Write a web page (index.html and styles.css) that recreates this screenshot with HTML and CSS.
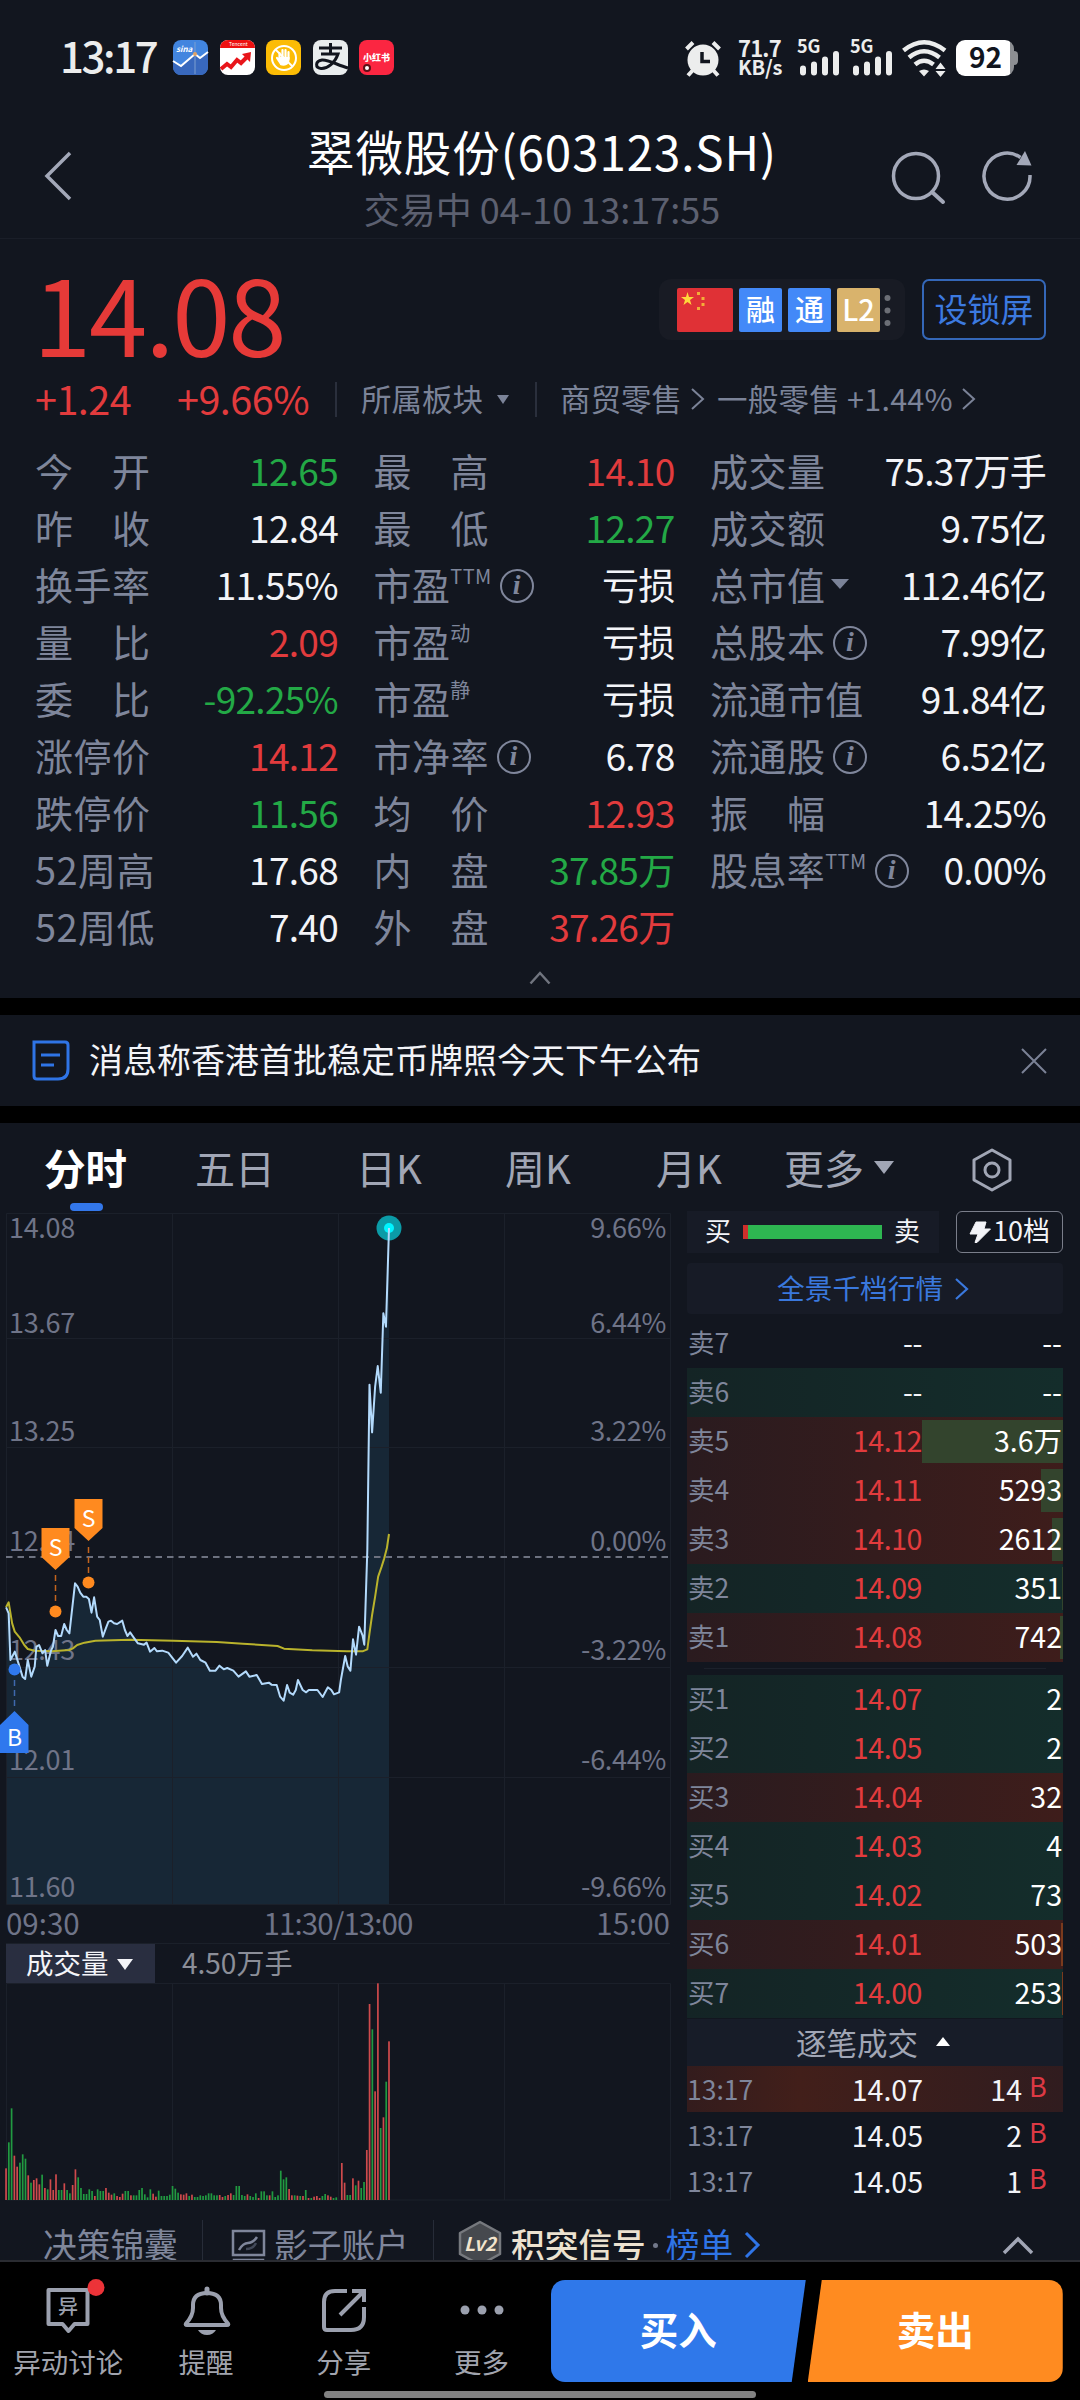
FILE: index.html
```html
<!DOCTYPE html>
<html lang="zh-CN">
<head>
    <meta charset="UTF-8">
    <meta name="viewport" content="width=device-width, initial-scale=1.0">
    <title>翠微股份(603123.SH)</title>
    <link rel="stylesheet" href="styles.css">
    <script>
        window.onload = function(){
            //成交量柱子，正数为红，负数为绿
            var morning = [95,-173,-275,133,100,-112,-137,-124,74,-52,60,65,47,-76,36,-32,62,30,77,-30,
                -30,50,-30,-20,45,92,-68,-36,-18,-18,-32,-27,12,-32,-27,-27,36,22,16,-20,
                12,9,19,-27,-27,14,-14,-14,-30,-36,-17,-8,-32,19,10,-28,-12,-12,-12,-16,
                -42,-34,-22,17,16,20,-12,16,-9,-9,-14,-12,-14,-20,-20,-14,-14,15,9,-12,
                15,20,-15,-42,-42,-15,-12,17,-12,-9,-20,6,-26,-26,-14,14,-26,-9,-14,-88,
                -62,-68,33,14,-14,13,-12,12,-30,6,-6,10,12,6,-12,-18,14,10,-6,-8];
            var afternoon = [111,52,-15,-15,65,-44,58,-36,-54,150,588,-512,326,650,-216,248,-355,476];
            var bars = document.getElementById("bars");
            draw(morning, 0);
            draw(afternoon, 121);

            function draw(list, start){
                for(var i = 0; i < list.length; i++){
                    var h = Math.abs(list[i]) / 3;
                    var rect = document.createElementNS("http://www.w3.org/2000/svg", "rect");
                    rect.setAttribute("x", (5.2 + (start + i) * 2.775).toFixed(2));
                    rect.setAttribute("y", (217 - h).toFixed(2));
                    rect.setAttribute("width", 1.7);
                    rect.setAttribute("height", h.toFixed(2));
                    rect.setAttribute("class", list[i] > 0 ? "bar_up" : "bar_down");
                    bars.appendChild(rect);
                }
            }
        }
    </script>
</head>
<body>
    <!-- 状态栏 -->
    <div class="status">
        <span class="clock">13:17</span>
        <div class="apps">
            <svg width="35" height="35" viewBox="0 0 35 35">
                <rect width="35" height="35" rx="8" fill="#4285df"/>
                <path d="M0 21L8 26L22 14L27 18L35 12V27a8 8 0 0 1-8 8H8a8 8 0 0 1-8-8z" fill="#3868bd"/>
                <path d="M0 21L8 26L22 14L27 18L35 12" fill="none" stroke="#fff" stroke-width="2"/>
                <path d="M22 2V34" stroke="#7d9fd0" stroke-width="1"/>
                <circle cx="22" cy="14" r="2" fill="#e0a266"/>
                <text x="3" y="12" font-size="8" font-style="italic" font-weight="700" fill="#fff">sina</text>
            </svg>
            <svg width="35" height="35" viewBox="0 0 35 35">
                <rect width="35" height="35" rx="8" fill="#fff"/>
                <path d="M0 8a8 8 0 0 1 8-8H27a8 8 0 0 1 8 8z" fill="#ee1111"/>
                <text x="9" y="6" font-size="5" fill="#fff">Tencent</text>
                <path d="M1 29L7 24L11 27L17 20L21 23L28 16" fill="none" stroke="#e8151a" stroke-width="4"/>
                <path d="M22 14L31 12L30 22z" fill="#e8151a"/>
            </svg>
            <svg width="35" height="35" viewBox="0 0 35 35">
                <rect width="35" height="35" rx="8" fill="#fcbc05"/>
                <circle cx="18" cy="18" r="12" fill="none" stroke="#fff" stroke-width="2"/>
                <path d="M13.500 20V13M16.500 18V10M19.500 18V10M22.500 19V12M11 18L15 24" stroke="#fff" stroke-width="2.200" stroke-linecap="round"/>
                <path d="M12.500 17H23.500V20a6 6 0 0 1-9 5z" fill="#fff"/>
                <path d="M9.500 9.500L26.500 26.500" stroke="#fff" stroke-width="1.800"/>
            </svg>
            <svg width="35" height="35" viewBox="0 0 35 35">
                <rect width="35" height="35" rx="8" fill="#e9edee"/>
                <path d="M6 8H29M17.500 3V14M8 14H25C22 23 14 29 8 28.500C2 28 2 21 9 20C16 19.500 24 25 35 28" fill="none" stroke="#11151e" stroke-width="3"/>
            </svg>
            <svg width="35" height="35" viewBox="0 0 35 35">
                <rect width="35" height="35" rx="8" fill="#fb2641"/>
                <text x="4" y="21" font-size="9" font-weight="900" fill="#fff">小红书</text>
                <circle cx="8" cy="28" r="3" fill="#fff" stroke="#5b1018" stroke-width="2"/>
            </svg>
        </div>
        <svg class="alarm" width="36" height="37" viewBox="0 0 36 37">
            <circle cx="18" cy="20" r="15.500" fill="#eceded"/>
            <path d="M1.500 9L8 2.500M34.500 9L28 2.500M8 30L3 35.500M28 30L33 35.500" stroke="#eceded" stroke-width="4"/>
            <path d="M17 12V21.500H25" fill="none" stroke="#11151e" stroke-width="3.500"/>
        </svg>
        <div class="speed"><span>71.7</span><span>KB/s</span></div>
        <div class="signal">
            <span>5G</span>
            <svg width="42" height="26" viewBox="0 0 42 26"><path d="M4 18.500V22.500M15 14.500V22.500M26 9.500V22.500M37 4V22.500" stroke="#eceded" stroke-width="6" stroke-linecap="round"/></svg>
        </div>
        <div class="signal">
            <span>5G</span>
            <svg width="42" height="26" viewBox="0 0 42 26"><path d="M4 18.500V22.500M15 14.500V22.500M26 9.500V22.500M37 4V22.500" stroke="#eceded" stroke-width="6" stroke-linecap="round"/></svg>
        </div>
        <svg class="wifi" width="46" height="37" viewBox="0 0 46 37">
            <path d="M1.500 10.500Q22 -6 43 10.500M7 17.500Q22 5 37.500 17.500M13 24.500Q22 17 31.500 24.500" fill="none" stroke="#eceded" stroke-width="4.500"/>
            <path d="M17 31Q22 28 27 31L22 36.500zM33.500 29L38.500 22.500L43.500 29zM33.500 31L38.500 37L43.500 31z" fill="#eceded"/>
        </svg>
        <div class="battery"><span>92</span></div>
        <i class="nub"></i>
    </div>

    <!-- 标题 -->
    <div class="header">
        <svg width="30" height="50" viewBox="0 0 30 50"><path d="M27 2L4 25L27 48" fill="none" stroke="#a3a8b8" stroke-width="3.500"/></svg>
        <div class="title">
            <h1>翠微股份(603123.SH)</h1>
            <p>交易中 04-10 13:17:55</p>
        </div>
        <svg class="search" width="56" height="54" viewBox="0 0 56 54">
            <circle cx="24" cy="24" r="22.500" fill="none" stroke="#a3a8b8" stroke-width="3.500"/>
            <path d="M40 40L51 50" stroke="#a3a8b8" stroke-width="4" stroke-linecap="round"/>
        </svg>
        <svg width="52" height="54" viewBox="0 0 52 54">
            <path d="M38.500 6.500A23 23 0 1 0 48 24" fill="none" stroke="#a3a8b8" stroke-width="3.500"/>
            <path d="M43 0L34.500 14L49.500 14.500z" fill="#a3a8b8"/>
        </svg>
    </div>

    <!-- 报价 -->
    <div class="quote">
        <div class="price_row">
            <span class="price">14.08</span>
            <div class="tags">
                <svg width="56" height="44" viewBox="0 0 56 44">
                    <rect width="56" height="44" rx="2" fill="#e03136"/>
                    <path d="M10.500 4L12 9H17L13 12L14.500 17L10.500 14L6.500 17L8 12L4 9H9z" fill="#ffd83b"/>
                    <path d="M20 4h3v3h-3zM24.500 9h3v3h-3zM24.500 15h3v3h-3zM20 19h3v3h-3z" fill="#f3ae38"/>
                </svg>
                <span class="tag">融</span>
                <span class="tag">通</span>
                <span class="tag gold">L2</span>
                <svg class="dots" width="7" height="34" viewBox="0 0 7 34"><g fill="#6c6f76"><circle cx="3.500" cy="5" r="3"/><circle cx="3.500" cy="17.500" r="3"/><circle cx="3.500" cy="30" r="3"/></g></svg>
            </div>
            <span class="lock">设锁屏</span>
        </div>
        <div class="change_row">
            <span class="change">+1.24</span>
            <span class="change pct">+9.66%</span>
            <span class="sector">所属板块<i class="tri"></i></span>
            <span class="industry">商贸零售<svg width="16" height="24" viewBox="0 0 16 24"><path d="M2 2L13 12L2 22" fill="none" stroke="#7b8398" stroke-width="2"/></svg></span>
            <span class="industry second">一般零售 +1.44%<svg width="16" height="24" viewBox="0 0 16 24"><path d="M2 2L13 12L2 22" fill="none" stroke="#7b8398" stroke-width="2"/></svg></span>
        </div>
        <div class="stats">
            <ul>
                <li><b>今开</b><em class="down">12.65</em></li>
                <li><b>昨收</b><em>12.84</em></li>
                <li><b>换手率</b><em>11.55%</em></li>
                <li><b>量比</b><em class="up">2.09</em></li>
                <li><b>委比</b><em class="down">-92.25%</em></li>
                <li><b>涨停价</b><em class="up">14.12</em></li>
                <li><b>跌停价</b><em class="down">11.56</em></li>
                <li><b class="long">52周高</b><em>17.68</em></li>
                <li><b class="long">52周低</b><em>7.40</em></li>
            </ul>
            <ul>
                <li><b>最高</b><em class="up">14.10</em></li>
                <li><b>最低</b><em class="down">12.27</em></li>
                <li><b class="long">市盈<sup>TTM</sup></b><i class="info">i</i><em>亏损</em></li>
                <li><b class="long">市盈<sup>动</sup></b><em>亏损</em></li>
                <li><b class="long">市盈<sup>静</sup></b><em>亏损</em></li>
                <li><b>市净率</b><i class="info">i</i><em>6.78</em></li>
                <li><b>均价</b><em class="up">12.93</em></li>
                <li><b>内盘</b><em class="down">37.85万</em></li>
                <li><b>外盘</b><em class="up">37.26万</em></li>
            </ul>
            <ul>
                <li><b>成交量</b><em>75.37万手</em></li>
                <li><b>成交额</b><em>9.75亿</em></li>
                <li><b>总市值</b><i class="tri"></i><em>112.46亿</em></li>
                <li><b>总股本</b><i class="info">i</i><em>7.99亿</em></li>
                <li><b class="long">流通市值</b><em>91.84亿</em></li>
                <li><b>流通股</b><i class="info">i</i><em>6.52亿</em></li>
                <li><b>振幅</b><em>14.25%</em></li>
                <li><b class="long">股息率<sup>TTM</sup></b><i class="info">i</i><em>0.00%</em></li>
            </ul>
        </div>
        <svg class="fold" width="22" height="14" viewBox="0 0 22 14"><path d="M1.500 12.500L11 2L20.500 12.500" fill="none" stroke="#70747e" stroke-width="2.500"/></svg>
    </div>

    <!-- 消息 -->
    <div class="news">
        <svg width="38" height="41" viewBox="0 0 38 41">
            <path d="M2 2H33Q36 2 36 5V29Q36 39 26 39H5Q2 39 2 36z" fill="none" stroke="#2f74e6" stroke-width="3"/>
            <path d="M9 15H28M9 25H22" stroke="#2f74e6" stroke-width="3"/>
        </svg>
        <p>消息称香港首批稳定币牌照今天下午公布</p>
        <svg width="28" height="28" viewBox="0 0 28 28"><path d="M2 2L26 26M26 2L2 26" stroke="#7b8296" stroke-width="2"/></svg>
    </div>

    <!-- 周期 -->
    <div class="tabs">
        <span class="active">分时</span>
        <span>五日</span>
        <span>日K</span>
        <span>周K</span>
        <span>月K</span>
        <span class="more">更多<i class="tri"></i></span>
        <svg width="42" height="44" viewBox="0 0 42 44">
            <path d="M21 2L39 12V32L21 42L3 32V12z" fill="none" stroke="#a1a6b5" stroke-width="3" stroke-linejoin="round"/>
            <circle cx="21" cy="22" r="7" fill="none" stroke="#a1a6b5" stroke-width="3"/>
        </svg>
    </div>

    <div class="main">
        <div class="chart">
            <svg width="680" height="697" viewBox="0 1211 680 697">
                <g transform="translate(0 1550) scale(.43367 .33333)">
                    <path class="area" d="M14 172L20 190L24 330L34 305L45 350L52 380L58 387L64 330L72 380L80 350L84 290L90 285L98 310L104 300L109 347L118 300L122 290L128 240L134 258L141 258L148 222L154 240L160 250L173 100L179 110L185 128L192 140L199 140L205 147L211 188L217 142L224 200L230 210L237 260L244 235L250 215L256 212L263 220L270 222L282 212L288 240L294 258L300 247L308 262L318 280L332 284L338 278L346 305L356 294L362 304L374 302L388 308L406 338L420 318L433 293L445 320L453 311L462 330L474 338L484 362L497 362L506 347L516 358L524 354L538 362L550 380L567 364L575 380L592 375L604 402L620 398L626 404L638 405L646 440L654 452L662 405L668 428L676 434L682 420L687 390L698 420L706 427L712 420L732 420L744 441L756 412L764 420L770 433L782 427L786 390L796 318L802 350L808 362L814 268L821 314L828 230L836 256L840 284L847 0L852 -496L858 -353L865 -490L871 -552L878 -472L884 -710L890 -670L897 -966V1062H14z"/>
                </g>
                <path class="grid" d="M6.500 1213.500H670.500V1904.500H6.500zM172.500 1213V1904M338.500 1213V1904M504.500 1213V1904M6 1338.500H670M6 1447.500H670M6 1667.500H670M6 1777.500H670"/>
                <path d="M6 1557H670" stroke="#6d7280" stroke-width="2" stroke-dasharray="6.500 5"/>
                <g class="axis">
                    <text x="9" y="1238">14.08</text>
                    <text x="9" y="1333">13.67</text>
                    <text x="9" y="1441">13.25</text>
                    <text x="9" y="1551">12.84</text>
                    <text x="9" y="1660">12.43</text>
                    <text x="9" y="1770">12.01</text>
                    <text x="9" y="1897">11.60</text>
                </g>
                <g class="axis right">
                    <text x="666" y="1238">9.66%</text>
                    <text x="666" y="1333">6.44%</text>
                    <text x="666" y="1441">3.22%</text>
                    <text x="666" y="1551">0.00%</text>
                    <text x="666" y="1660">-3.22%</text>
                    <text x="666" y="1770">-6.44%</text>
                    <text x="666" y="1897">-9.66%</text>
                </g>
                <circle cx="389" cy="1228" r="12.500" fill="#0b9ba7"/>
                <circle cx="389" cy="1228" r="5" fill="#00f4ff"/>
                <g transform="translate(0 1550) scale(.43367 .33333)">
                    <path class="avg" d="M14 172L20 157L28 220L34 245L45 262L56 285L64 297L80 302L120 304L160 300L168 295L178 285L195 278L220 272L300 269L400 272L500 276L560 281L640 288L655 296L720 301L800 304L836 304L847 298L852 250L858 195L865 140L872 80L880 50L886 25L892 -5L897 -48"/>
                    <path class="line" d="M14 172L20 190L24 330L34 305L45 350L52 380L58 387L64 330L72 380L80 350L84 290L90 285L98 310L104 300L109 347L118 300L122 290L128 240L134 258L141 258L148 222L154 240L160 250L173 100L179 110L185 128L192 140L199 140L205 147L211 188L217 142L224 200L230 210L237 260L244 235L250 215L256 212L263 220L270 222L282 212L288 240L294 258L300 247L308 262L318 280L332 284L338 278L346 305L356 294L362 304L374 302L388 308L406 338L420 318L433 293L445 320L453 311L462 330L474 338L484 362L497 362L506 347L516 358L524 354L538 362L550 380L567 364L575 380L592 375L604 402L620 398L626 404L638 405L646 440L654 452L662 405L668 428L676 434L682 420L687 390L698 420L706 427L712 420L732 420L744 441L756 412L764 420L770 433L782 427L786 390L796 318L802 350L808 362L814 268L821 314L828 230L836 256L840 284L847 0L852 -496L858 -353L865 -490L871 -552L878 -472L884 -710L890 -670L897 -966"/>
                </g>
                <!-- 买卖点 -->
                <g class="sell_mark">
                    <path class="dash" d="M55.500 1575V1605M88.500 1547V1576"/>
                    <circle cx="55.500" cy="1611.500" r="6"/>
                    <circle cx="88.500" cy="1582.500" r="6"/>
                    <path d="M41.500 1528H69.500V1557L55.500 1570L41.500 1557z"/>
                    <path d="M74.500 1499H102.500V1528L88.500 1541L74.500 1528z"/>
                    <text x="55.500" y="1556">S</text>
                    <text x="88.500" y="1527">S</text>
                </g>
                <g class="buy_mark">
                    <path class="dash" d="M14.500 1680V1710"/>
                    <circle cx="14.500" cy="1669.500" r="6"/>
                    <path d="M0 1753V1725L14.500 1711L28.500 1725V1753z"/>
                    <text x="14.500" y="1746">B</text>
                </g>
            </svg>
            <div class="times"><span>09:30</span><span class="noon">11:30/13:00</span><span>15:00</span></div>
            <div class="vol_head"><span class="vol_tab">成交量<i class="tri"></i></span><span class="vol_num">4.50万手</span></div>
            <svg width="680" height="220" viewBox="0 0 680 220">
                <path class="grid" d="M6.500 .5H670.500V217H6.500zM172.500 0V217M338.500 0V217M504.500 0V217"/>
                <g id="bars"></g>
            </svg>
        </div>

        <!-- 盘口 -->
        <div class="book">
            <div class="book_head">
                <div class="ratio"><span>买</span><i></i><span>卖</span></div>
                <div class="level"><svg width="22" height="22" viewBox="0 0 22 22"><path d="M7 1H17L15 8H21.500L8 21.500H6L9 13H1z" fill="#f3f4f8" stroke="#f3f4f8" stroke-linejoin="round"/></svg>10档</div>
            </div>
            <div class="panorama">全景千档行情<svg width="16" height="24" viewBox="0 0 16 24"><path d="M2 2L13 12L2 22" fill="none" stroke="#3a78dd" stroke-width="2.200"/></svg></div>
            <div class="row"><b>卖7</b><em class="flat">--</em><em class="qty">--</em></div>
            <div class="row green"><b>卖6</b><em class="flat">--</em><em class="qty">--</em></div>
            <div class="row red"><b>卖5</b><em>14.12</em><em class="qty"><i style="width:141px"></i>3.6万</em></div>
            <div class="row red"><b>卖4</b><em>14.11</em><em class="qty"><i style="width:22px"></i>5293</em></div>
            <div class="row red"><b>卖3</b><em>14.10</em><em class="qty"><i style="width:11px"></i>2612</em></div>
            <div class="row green"><b>卖2</b><em>14.09</em><em class="qty"><i style="width:1px"></i>351</em></div>
            <div class="row red"><b>卖1</b><em>14.08</em><em class="qty"><i style="width:3px"></i>742</em></div>
            <div class="split"></div>
            <div class="row green"><b>买1</b><em>14.07</em><em class="qty">2</em></div>
            <div class="row green"><b>买2</b><em>14.05</em><em class="qty">2</em></div>
            <div class="row red"><b>买3</b><em>14.04</em><em class="qty">32</em></div>
            <div class="row green"><b>买4</b><em>14.03</em><em class="qty">4</em></div>
            <div class="row green"><b>买5</b><em>14.02</em><em class="qty">73</em></div>
            <div class="row red"><b>买6</b><em>14.01</em><em class="qty bid"><i style="width:2px"></i>503</em></div>
            <div class="row green"><b>买7</b><em>14.00</em><em class="qty bid"><i style="width:1px"></i>253</em></div>
            <div class="deal_head">逐笔成交<i class="tri_up"></i></div>
            <div class="deal hot"><b>13:17</b><em>14.07</em><em class="num">14</em><u>B</u></div>
            <div class="deal"><b>13:17</b><em>14.05</em><em class="num">2</em><u>B</u></div>
            <div class="deal"><b>13:17</b><em>14.05</em><em class="num">1</em><u>B</u></div>
        </div>
    </div>

    <div class="tools">
        <span class="tool">决策锦囊</span>
        <span class="tool shadow">
            <svg width="36" height="36" viewBox="0 0 36 36"><path d="M2 2H33V26H2zM3 34V31H32V34" fill="none" stroke="#7f869b" stroke-width="2.500"/><path d="M8 21Q12 14 17 14T26 8" fill="none" stroke="#7f869b" stroke-width="2.500"/><path d="M15 20Q22 20 25 14" fill="none" stroke="#414858" stroke-width="2.500"/></svg>影子账户
        </span>
        <span class="tool signals">
            <svg width="44" height="46" viewBox="0 0 44 46">
                <path d="M22 2L42 13V34L22 45L2 34V13z" fill="#46494e" stroke="#76797e" stroke-width="2.500" stroke-linejoin="round"/>
                <text x="22" y="31" font-size="19" font-weight="700" font-style="italic" text-anchor="middle" fill="#f2e4cd">Lv2</text>
            </svg>积突信号<s></s><a>榜单</a>
            <svg class="go" width="18" height="28" viewBox="0 0 18 28"><path d="M2 2L14 14L2 26" fill="none" stroke="#2f74e6" stroke-width="3"/></svg>
        </span>
        <svg class="open" width="32" height="20" viewBox="0 0 32 20"><path d="M2 17L16 3L30 17" fill="none" stroke="#a1a6b5" stroke-width="3.500"/></svg>
    </div>

    <!-- 底部 -->
    <div class="nav">
        <div class="item">
            <svg width="60" height="60" viewBox="0 0 60 60">
                <path d="M9.500 11H48.500V45H35.500L29.500 52L23.500 45H9.500z" fill="none" stroke="#9ba0ae" stroke-width="4" stroke-linejoin="round"/>
                <text x="29" y="35" font-size="20" font-weight="500" text-anchor="middle" fill="#9ba0ae">异</text>
                <circle cx="57" cy="8.500" r="8.500" fill="#ec3338"/>
            </svg>
            <span>异动讨论</span>
        </div>
        <div class="item">
            <svg width="60" height="60" viewBox="0 0 60 60">
                <path d="M9 44.500Q16 37 16 29V26Q16 14 30 14T44 26V29Q44 37 51 44.500Q52 46 50 46H10Q8 46 9 44.500z" fill="none" stroke="#9ba0ae" stroke-width="4"/>
                <path d="M30 10V14" stroke="#9ba0ae" stroke-width="5" stroke-linecap="round"/>
                <path d="M21 51H39Q36 56 30 56T21 51z" fill="#9ba0ae"/>
            </svg>
            <span>提醒</span>
        </div>
        <div class="item">
            <svg width="60" height="60" viewBox="0 0 60 60">
                <path d="M33 12H21Q10 12 10 23V48Q10 51 13 51H37Q50 51 50 38V28M38 12H50V23M26 36L49 13" fill="none" stroke="#9ba0ae" stroke-width="4"/>
            </svg>
            <span>分享</span>
        </div>
        <div class="item">
            <svg width="60" height="60" viewBox="0 0 60 60"><g fill="#9ba0ae"><circle cx="13" cy="31" r="4.500"/><circle cx="30" cy="31" r="4.500"/><circle cx="47" cy="31" r="4.500"/></g></svg>
            <span>更多</span>
        </div>
        <div class="btn buy">买入</div>
        <div class="btn sell">卖出</div>
    </div>
    <div class="home"></div>
</body>
</html>
```
FILE: styles.css
```css
*{
    margin: 0;
    padding: 0;
    list-style-type: none;
    box-sizing: border-box;
}
body{
    width: 1080px;
    height: 2400px;
    overflow: hidden;
    background-color: #000;
    color: #f3f4f8;
    font-family: "Noto Sans CJK SC", "Noto Sans", sans-serif;
}
svg{
    display: block;
    flex: none;
    overflow: visible;
}
b,em,i,u,s{
    font-style: normal;
    font-weight: 400;
    text-decoration: none;
}
span,em,b,p,h1{
    white-space: nowrap;
}
.up{
    color: #e23b3d;
}
.down{
    color: #23a946;
}
.tri{
    width: 0;
    height: 0;
    border: 8px solid transparent;
    border-top: 11px solid #7b8398;
    border-bottom: 0;
}

/* 状态栏 */
.status{
    display: flex;
    height: 115px;
    padding: 40px 60px 0 60px;
    background-color: #12161f;
    color: #eceded;
}
.clock{
    width: 113px;
    font-size: 42px;
    line-height: 30px;
    font-weight: 500;
    letter-spacing: -2.4px;
}
.apps{
    display: flex;
    gap: 11.5px;
    width: 512px;
}
.speed{
    width: 60px;
    padding-left: 17px;
    font-size: 22px;
    font-weight: 700;
}
.speed span{
    display: block;
    width: 50px;
    line-height: 14px;
    margin-bottom: 6px;
    letter-spacing: -.8px;
}
.speed span + span{
    font-size: 20px;
    letter-spacing: -.2px;
}
.signal{
    width: 53px;
    height: 36px;
}
.speed + .signal{
    margin-left: 16px;
}
.signal span{
    display: block;
    height: 10px;
    font-size: 18px;
    font-weight: 700;
    line-height: 11px;
}
.signal svg{
    margin-left: 2px;
}
.wifi{
    margin-left: -1px;
}
.battery{
    width: 58px;
    height: 36px;
    margin-left: 8px;
    border-radius: 9px;
    background: linear-gradient(90deg, #fff 54px, #8d8f93 54px);
}
.battery span{
    display: block;
    width: 59px;
    text-align: center;
    color: #11151e;
    font-size: 28px;
    line-height: 32px;
    font-weight: 700;
}
.nub{
    width: 4px;
    height: 14px;
    margin-top: 11px;
    border-radius: 0 4px 4px 0;
    background-color: #8d8f93;
}

/* 标题 */
.header{
    display: flex;
    align-items: flex-start;
    height: 124px;
    padding: 36px 46px 0 43px;
    border-bottom: 1px solid #1a1e28;
    background-color: #12161f;
}
.title{
    flex: 1;
    margin-top: -26px;
    padding-left: 119px;
    text-align: center;
}
.title h1{
    font-size: 47.5px;
    font-weight: 400;
    line-height: 52px;
    letter-spacing: .9px;
    color: #fff;
}
.title p{
    margin-top: 5px;
    font-size: 36px;
    line-height: 52px;
    color: #5c6070;
}
.search{
    margin: 1px 34px 0 0;
}

/* 报价 */
.quote{
    height: 759px;
    background-color: #12161f;
}
.price_row{
    display: flex;
    height: 130px;
    padding: 40px 34px 0 33px;
}
.price{
    flex: 1;
    margin-top: -14px;
    color: #e63a38;
    font-size: 105px;
    line-height: 92px;
    letter-spacing: -2.2px;
}
.tags{
    display: flex;
    align-items: center;
    gap: 6px;
    width: 246px;
    height: 61px;
    padding-left: 18px;
    border-radius: 12px;
    background-color: #181b24;
}
.tag{
    width: 43px;
    height: 44px;
    border-radius: 2px;
    background-color: #4389f8;
    color: #fff;
    font-size: 29px;
    line-height: 40px;
    font-weight: 500;
    text-align: center;
}
.gold{
    background-color: #d9b36c;
}
.dots{
    margin-left: -2px;
}
.lock{
    width: 124px;
    height: 61px;
    margin-left: 17px;
    border: 2px solid #3467b8;
    border-radius: 7px;
    color: #3c7ae0;
    font-size: 33px;
    line-height: 54px;
    text-align: center;
}
.change_row{
    display: flex;
    align-items: center;
    height: 60px;
    padding-left: 35px;
    color: #7b8398;
    font-size: 30.5px;
    line-height: 34px;
}
.change{
    width: 142px;
    color: #e23b3d;
    font-size: 39.5px;
    letter-spacing: -.5px;
    margin-top: -2px;
}
.pct{
    width: 158px;
}
.sector,.industry{
    display: flex;
    align-items: center;
    height: 35px;
    padding-bottom: 3px;
    border-left: 2px solid #2a2f3c;
}
.sector{
    width: 200px;
    padding-left: 24px;
}
.sector .tri{
    border-width: 9px 6px 0;
    margin: 3px 0 0 14px;
}
.industry{
    padding-left: 23px;
}
.industry svg{
    margin: 3px 0 0 8px;
}
.second{
    padding-left: 11px;
    border: 0;
    letter-spacing: .25px;
}
.stats{
    display: grid;
    grid-template-columns: 303px 301px 336px;
    column-gap: 35.5px;
    height: 528px;
    padding: 15px 0 0 35px;
}
.stats li{
    display: flex;
    align-items: center;
    height: 57px;
    line-height: 50px;
    padding-bottom: 5px;
}
.stats b{
    width: 115px;
    color: #7f869b;
    font-size: 38px;
    text-align: justify;
    text-align-last: justify;
}
.stats b.long{
    width: auto;
    text-align-last: left;
    letter-spacing: .4px;
}
.stats em{
    margin-left: auto;
    font-size: 37px;
    letter-spacing: -0.7px;
}
.stats sup{
    font-size: 20px;
    line-height: 20px;
    vertical-align: 16px;
}
.stats .tri{
    margin-left: 6px;
    border-width: 10px 9px 0;
}
.info{
    width: 34px;
    height: 34px;
    margin: 4px 0 0 8px;
    border: 2.5px solid #7f869b;
    border-radius: 50%;
    color: #7f869b;
    font: italic 700 28px/27px "Liberation Serif", serif;
    text-align: center;
}
.fold{
    margin: 14px auto 0 529px;
}

/* 消息 */
.news{
    display: flex;
    align-items: center;
    height: 91px;
    margin: 17px 0;
    padding: 0 32px;
    background-color: #12161f;
}
.news p{
    flex: 1;
    padding: 0 0 4px 19px;
    font-size: 34px;
}

/* 周期 */
.tabs{
    display: flex;
    height: 88px;
    padding: 21px 0 0 44px;
    background-color: #12161f;
    color: #a1a6b5;
    font-size: 40px;
    line-height: 46px;
}
.tabs span{
    width: 151px;
}
.tabs span:nth-child(2){
    width: 161px;
}
.tabs span:nth-child(3){
    width: 149px;
}
.tabs span:nth-child(5){
    width: 128px;
}
.tabs .active{
    color: #fff;
    font-size: 41.5px;
    font-weight: 700;
}
.tabs .active::after{
    content: "";
    display: block;
    width: 33px;
    height: 8px;
    margin: 13px 0 0 26px;
    border-radius: 4px;
    background-color: #3377ea;
}
.tabs .more{
    display: flex;
    width: 187px;
}
.tabs .tri{
    margin: 17px 0 0 10px;
    border-width: 13px 10px 0;
    border-top-color: #a1a6b5;
}
.tabs svg{
    margin-top: 4px;
}

/* 分时图 */
.main{
    display: flex;
    height: 998px;
    background-color: #12161f;
}
.chart{
    width: 687px;
}
.grid{
    fill: none;
    stroke: #1b202a;
}
.area{
    fill: #172736;
}
.line,.avg{
    fill: none;
    stroke: #b3dafc;
    stroke-width: 2;
    vector-effect: non-scaling-stroke;
    stroke-linejoin: round;
}
.avg{
    stroke: #b9b32c;
}
.axis{
    fill: #6f7488;
    font-size: 27px;
    letter-spacing: -.3px;
}
.right{
    text-anchor: end;
}
.sell_mark,.buy_mark{
    fill: #ff8a1f;
    font-size: 23px;
    text-anchor: middle;
}
.buy_mark{
    fill: #2f78ee;
}
.sell_mark text,.buy_mark text{
    fill: #fff;
}
.dash{
    stroke: #c4641d;
    stroke-width: 1.500;
    stroke-dasharray: 6 4;
}
.buy_mark .dash{
    stroke: #3f68ad;
}
.times{
    display: flex;
    justify-content: space-between;
    width: 670px;
    height: 35px;
    padding-left: 6px;
    color: #6f7488;
    font-size: 29.5px;
    line-height: 28px;
}
.noon{
    letter-spacing: -.9px;
}
.vol_head{
    display: flex;
    width: 664px;
    height: 40px;
    margin-left: 6px;
    border-top: 1px solid #1b202a;
    font-size: 27.5px;
    line-height: 37px;
}
.vol_tab{
    display: flex;
    width: 149px;
    padding-left: 20px;
    background-color: #292e40;
}
.vol_tab .tri{
    margin: 15px 0 0 8px;
    border-width: 11px 8px 0;
    border-top-color: #f3f4f8;
}
.vol_num{
    padding-left: 27px;
    color: #8b8e98;
    font-size: 28px;
}
.bar_up{
    fill: #cf4a4c;
}
.bar_down{
    fill: #219a41;
}

/* 盘口 */
.book{
    width: 376px;
}
.book_head{
    display: flex;
    justify-content: space-between;
    height: 42px;
    font-size: 26px;
    line-height: 38px;
}
.ratio{
    display: flex;
    width: 252px;
    padding-left: 18px;
    background-color: #171b26;
}
.ratio i{
    width: 139px;
    height: 14px;
    margin: 14px 12px 0 12px;
    background: linear-gradient(90deg, #ce2f2b 5px, #2eb651 5px);
}
.level{
    display: flex;
    width: 107px;
    border: 1px solid #7a7e8a;
    border-radius: 6px;
    padding-left: 12px;
    font-size: 27px;
    line-height: 36px;
}
.level svg{
    margin: 9px 2px 0 0;
}
.panorama{
    display: flex;
    height: 51px;
    margin: 10px 0 5px;
    padding-left: 90px;
    border-radius: 4px;
    background-color: #171b26;
    color: #3a78dd;
    font-size: 27.7px;
    line-height: 48px;
}
.panorama svg{
    margin: 14px 0 0 11px;
}
.row,.deal{
    display: flex;
    height: 49px;
    font-size: 28.5px;
    line-height: 46px;
}
.row b{
    width: 104px;
    padding-left: 1px;
    color: #7f869b;
    font-size: 26.5px;
}
.row em{
    width: 131px;
    color: #e23b3d;
    text-align: right;
    letter-spacing: -.4px;
}
.row .flat{
    color: #f3f4f8;
}
.row .qty{
    display: flex;
    justify-content: flex-end;
    position: relative;
    width: 141px;
    padding-right: 1px;
    color: #fff;
    letter-spacing: 0;
    z-index: 1;
}
.qty i{
    position: absolute;
    right: 0;
    top: 3px;
    height: 43px;
    background-color: #33442d;
    z-index: -1;
}
.bid i{
    background-color: #7a3a1d;
}
.green{
    background: linear-gradient(90deg, #142425, #142d2b);
}
.red{
    background: linear-gradient(90deg, #2a1b1f, #3e1d1b);
}
.split{
    height: 13px;
    margin: 0 17px;
    background: linear-gradient(#1c212b, #1c212b) no-repeat 0 6px / 100% 1px;
}
.deal_head{
    display: flex;
    height: 47px;
    margin-top: 1px;
    padding-left: 109px;
    background-color: #171c28;
    color: #a1a6b5;
    font-size: 30.5px;
    line-height: 46px;
}
.tri_up{
    width: 0;
    height: 0;
    margin: 18px 0 0 18px;
    border: 7px solid transparent;
    border-bottom: 9px solid #fff;
    border-top: 0;
}
.deal{
    height: 46px;
    line-height: 45px;
}
.deal b{
    width: 104px;
    color: #7f869b;
    font-size: 26.5px;
}
.deal em{
    width: 132px;
    text-align: right;
}
.deal .num{
    width: 99px;
}
.deal u{
    margin-left: 7px;
    color: #dd3944;
    font-size: 27px;
    line-height: 39px;
}
.hot{
    background: linear-gradient(90deg, #331c1d, #421f1a 30%, #301c1f);
}

.tools{
    display: flex;
    height: 53px;
    padding: 11px 0 0 43px;
    overflow: hidden;
    border-bottom: 2px solid #2a2c32;
    background-color: #12161f;
    color: #7f869b;
    font-size: 33.7px;
    line-height: 47px;
}
.tool{
    display: flex;
    height: 46px;
    width: 159px;
}
.shadow,.signals{
    width: 231px;
    padding-left: 28px;
    border-left: 1px solid #272c38;
}
.shadow svg{
    margin: 9px 7px 0 0;
}
.signals{
    width: 569px;
    padding-left: 24px;
    color: #ece2d0;
    font-weight: 500;
}
.signals svg{
    margin: 0 9px 0 0;
}
.signals s{
    width: 5px;
    height: 5px;
    margin: 23px 8px 0 7px;
    border-radius: 50%;
    background-color: #72788a;
}
.signals a{
    color: #2f74e6;
    font-weight: 400;
}
.signals .go{
    margin: 11px 0 0 11px;
}
.open{
    margin-top: 16px;
}

/* 底部 */
.nav{
    display: flex;
    height: 129px;
    padding-top: 17px;
}
.item{
    width: 137.7px;
    color: #a1a4ae;
    font-size: 27.5px;
    line-height: 32px;
    text-align: center;
}
.item svg{
    margin: 0 auto 6px;
}
.item span{
    display: block;
    margin-left: -1px;
}
.btn{
    height: 102px;
    margin-top: 1px;
    color: #fff;
    font-size: 38.5px;
    line-height: 96px;
    font-weight: 700;
    text-align: center;
}
.buy{
    width: 255px;
    border-radius: 14px 0 0 14px;
    background-color: #2f78ea;
    clip-path: polygon(0 0, 100% 0, 94.5% 100%, 0 100%);
}
.sell{
    width: 255px;
    margin-left: 2px;
    border-radius: 0 14px 14px 0;
    background-color: #ff8b20;
    clip-path: polygon(5.500% 0, 100% 0, 100% 100%, 0 100%);
}
.home{
    width: 432px;
    height: 7px;
    margin-left: 324px;
    border-radius: 4px;
    background-color: #828282;
}
```
